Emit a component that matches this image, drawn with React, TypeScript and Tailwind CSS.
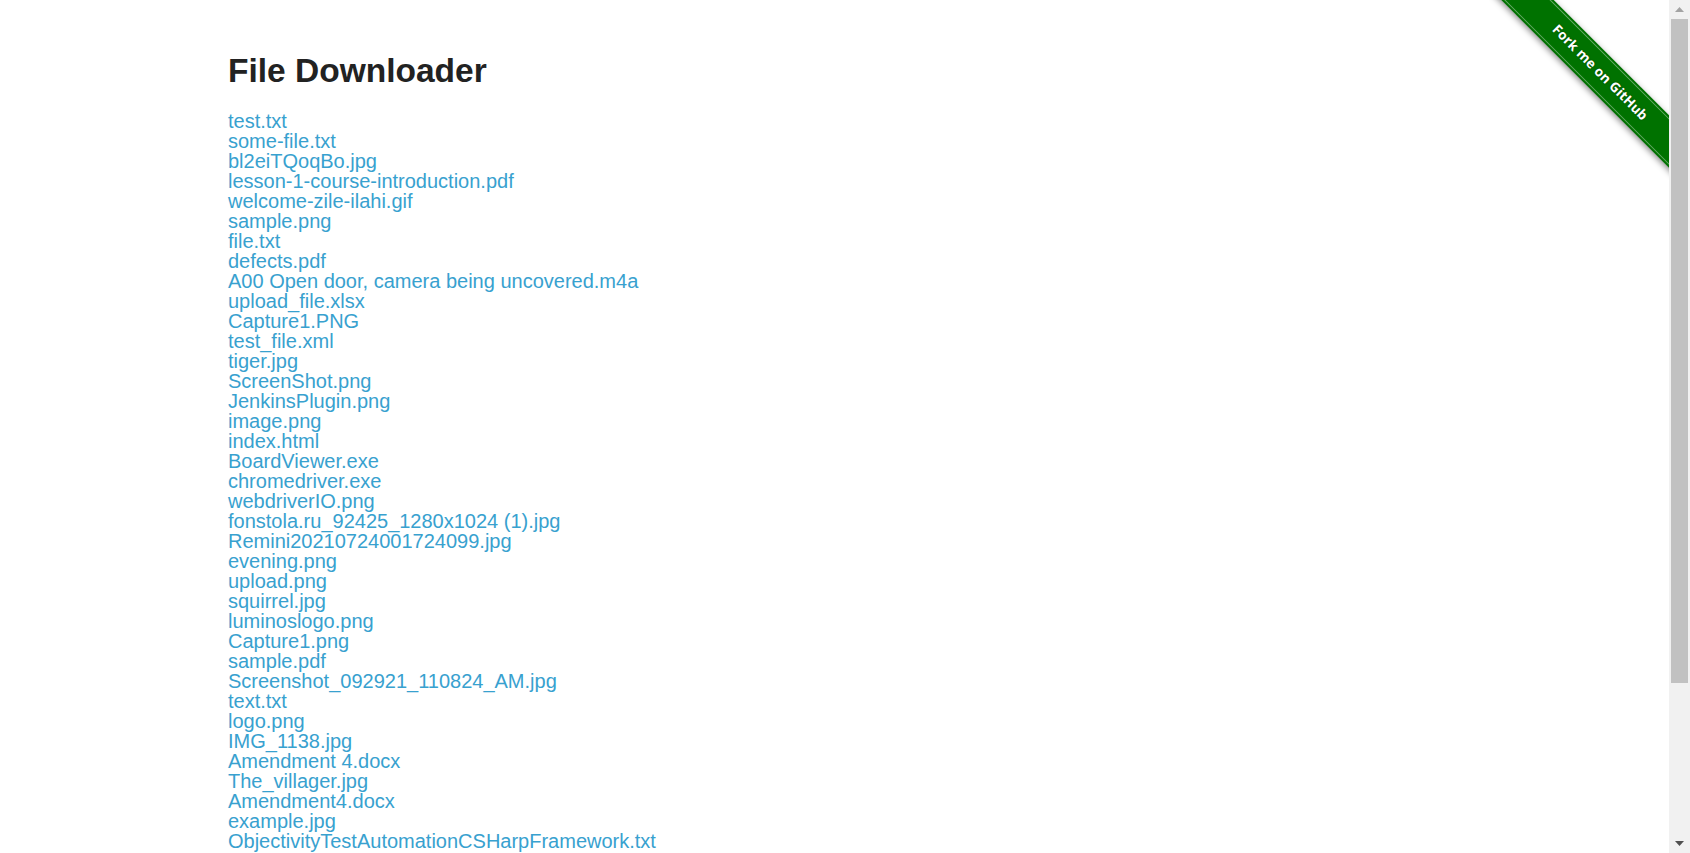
import React from "react";

const files = [
  "test.txt",
  "some-file.txt",
  "bl2eiTQoqBo.jpg",
  "lesson-1-course-introduction.pdf",
  "welcome-zile-ilahi.gif",
  "sample.png",
  "file.txt",
  "defects.pdf",
  "A00 Open door, camera being uncovered.m4a",
  "upload_file.xlsx",
  "Capture1.PNG",
  "test_file.xml",
  "tiger.jpg",
  "ScreenShot.png",
  "JenkinsPlugin.png",
  "image.png",
  "index.html",
  "BoardViewer.exe",
  "chromedriver.exe",
  "webdriverIO.png",
  "fonstola.ru_92425_1280x1024 (1).jpg",
  "Remini20210724001724099.jpg",
  "evening.png",
  "upload.png",
  "squirrel.jpg",
  "luminoslogo.png",
  "Capture1.png",
  "sample.pdf",
  "Screenshot_092921_110824_AM.jpg",
  "text.txt",
  "logo.png",
  "IMG_1138.jpg",
  "Amendment 4.docx",
  "The_villager.jpg",
  "Amendment4.docx",
  "example.jpg",
  "ObjectivityTestAutomationCSHarpFramework.txt",
];

function Ribbon() {
  return (
    <div className="absolute top-0 right-0 w-[180px] h-[180px] overflow-hidden pointer-events-none">
      <a
        href="#"
        className="absolute left-[-39px] top-[54px] w-[300px] h-[37px] rotate-45 bg-[#007200] py-[2px] shadow-[0_2px_6px_rgba(0,0,0,0.45)] pointer-events-auto"
      >
        <span className="flex h-full items-center justify-center border-y border-white/40 text-white text-[13.5px] font-bold tracking-[0.1px] [font-family:'Open_Sans','Liberation_Sans',sans-serif] [text-shadow:0_0_2px_rgba(0,0,0,0.4)]">
          Fork me on GitHub
        </span>
      </a>
    </div>
  );
}

function Scrollbar() {
  return (
    <div className="w-[21px] h-full bg-[#f1f1f1] flex flex-col shrink-0">
      <div className="h-[17px] flex items-center justify-center pt-[2px]">
        <svg width="9" height="5" viewBox="0 0 9 5">
          <polygon points="0,5 9,5 4.5,0" fill="#a3a3a3" />
        </svg>
      </div>
      <div className="flex-1 px-[2px] pt-[2px]">
        <div className="h-[664px] bg-[#c1c1c1]" />
      </div>
      <div className="h-[17px] flex items-center justify-center pb-[2px]">
        <svg width="9" height="5" viewBox="0 0 9 5">
          <polygon points="0,0 9,0 4.5,5" fill="#505050" />
        </svg>
      </div>
    </div>
  );
}

export default function App() {
  return (
    <div className="w-[1690px] h-[853px] flex bg-white overflow-hidden [font-family:'Liberation_Sans',Arial,sans-serif]">
      <div className="relative flex-1 h-full overflow-hidden">
        <div className="pl-[228px] pt-[53px]">
          <h3 className="text-[33.5px] leading-[1.1] font-bold text-[#222]">File Downloader</h3>
          <div className="mt-[21px] flex flex-col items-start">
            {files.map((f) => (
              <a key={f} href="#" className="text-[20px] leading-[20px] text-[#38a1cf] whitespace-pre">
                {f}
              </a>
            ))}
          </div>
        </div>
        <Ribbon />
      </div>
      <Scrollbar />
    </div>
  );
}
